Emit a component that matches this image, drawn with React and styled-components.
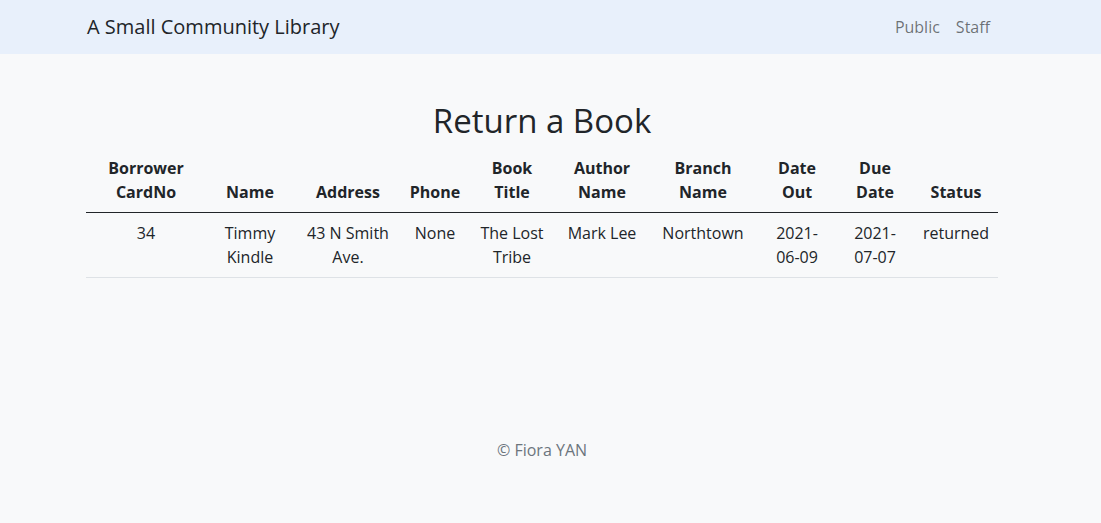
import React from 'react'
import styled, { createGlobalStyle } from 'styled-components'

const GlobalStyle = createGlobalStyle`
    html, body {
        margin: 0;
        padding: 0;
        background: #f8f9fa;
        color: #212529;
        font-family: "Open Sans", "Noto Sans", sans-serif;
        font-size: 16px;
        line-height: 1.5;
    }
`

const Navbar = styled.nav`
    height: 54px;
    background-color: #e8f0fb;
    padding-right: 17px;
`

const NavInner = styled.div`
    width: 912px;
    height: 100%;
    margin: 0 auto;
    display: flex;
    align-items: center;
    justify-content: space-between;
`

const Brand = styled.a`
    font-size: 20px;
    color: #212529;
    text-decoration: none;
    margin-left: 1px;
`

const NavLinks = styled.div`
    display: flex;
`

const NavLink = styled.a`
    color: rgba(0, 0, 0, 0.55);
    text-decoration: none;
    padding: 0 8px;
`

const Main = styled.main`
    width: 912px;
    margin: 0 auto;
    padding-right: 17px;
    box-sizing: content-box;
`

const Title = styled.h1`
    font-size: 33px;
    font-weight: 400;
    line-height: 40px;
    text-align: center;
    margin: 47px 0 7px;
`

const Table = styled.table`
    width: 100%;
    table-layout: fixed;
    border-collapse: collapse;
    text-align: center;
`

const Col = styled.col(({ w }) => `
    width: ${w}px;
`)

const Th = styled.th`
    font-weight: 700;
    padding: 8px 7px;
    vertical-align: bottom;
    border-bottom: 1px solid #212529;
`

const Td = styled.td`
    padding: 8px 7px;
    vertical-align: top;
    border-bottom: 1px solid #dee2e6;
`

const Footer = styled.footer`
    text-align: center;
    color: #6c757d;
    margin-top: 160px;
`

const columns = [
    { label: 'Borrower CardNo', w: 120 },
    { label: 'Name', w: 88 },
    { label: 'Address', w: 108 },
    { label: 'Phone', w: 66 },
    { label: 'Book Title', w: 88 },
    { label: 'Author Name', w: 92 },
    { label: 'Branch Name', w: 110 },
    { label: 'Date Out', w: 78 },
    { label: 'Due Date', w: 78 },
    { label: 'Status', w: 84 },
]

const rows = [
    ['34', 'Timmy Kindle', '43 N Smith Ave.', 'None', 'The Lost Tribe', 'Mark Lee', 'Northtown', '2021-06-09', '2021-07-07', 'returned'],
]

function App () {
    return (
        <>
            <GlobalStyle />
            <Navbar>
                <NavInner>
                    <Brand href="#">A Small Community Library</Brand>
                    <NavLinks>
                        <NavLink href="#">Public</NavLink>
                        <NavLink href="#">Staff</NavLink>
                    </NavLinks>
                </NavInner>
            </Navbar>
            <Main>
                <Title>Return a Book</Title>
                <Table>
                    <colgroup>
                        { columns.map((c, i) => <Col key={i} w={c.w} />) }
                    </colgroup>
                    <thead>
                        <tr>
                            { columns.map((c, i) => <Th key={i}>{ c.label }</Th>) }
                        </tr>
                    </thead>
                    <tbody>
                        { rows.map((r, i) => (
                            <tr key={i}>
                                { r.map((v, j) => <Td key={j}>{ v }</Td>) }
                            </tr>
                        )) }
                    </tbody>
                </Table>
                <Footer>© Fiora YAN</Footer>
            </Main>
        </>
    )
}

export default App
